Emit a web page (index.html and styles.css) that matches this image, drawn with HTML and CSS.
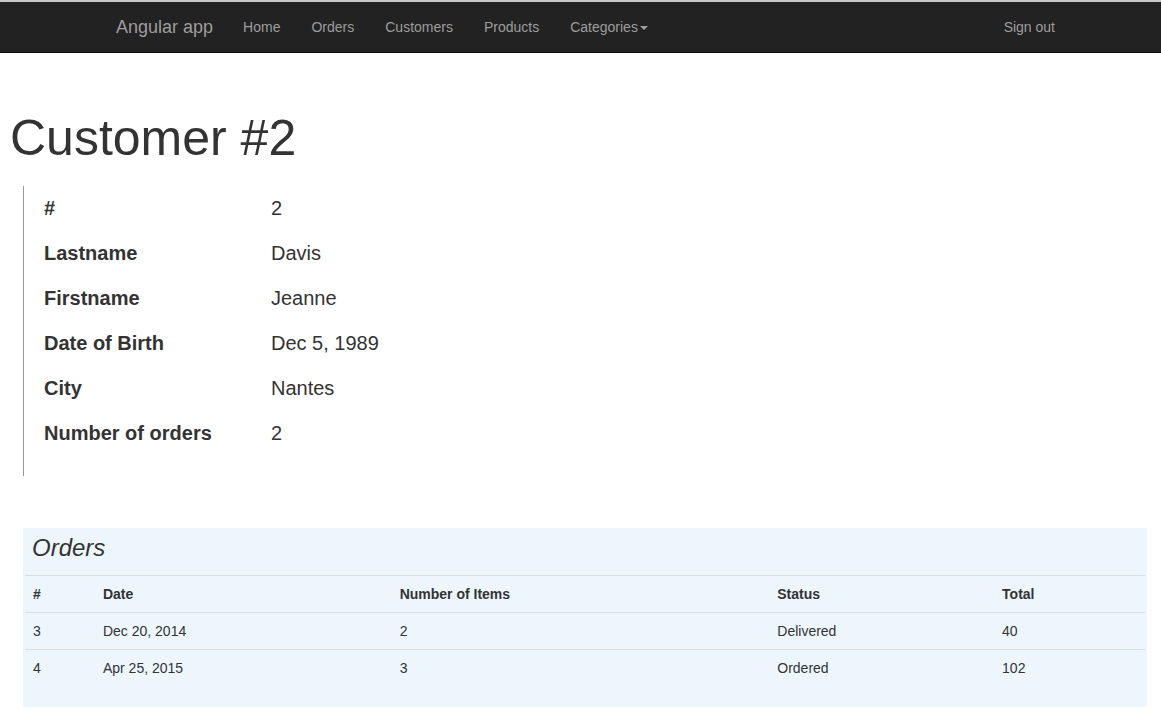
FILE: index.html
```html
<!DOCTYPE html>
<html lang="en">
<head>
<meta charset="utf-8">
<title>Angular app</title>
<link rel="stylesheet" href="styles.css">
</head>
<body>
<div class="topline"></div>
<nav class="navbar">
  <a class="brand" href="#">Angular app</a>
  <ul class="nav nav-left">
    <li><a href="#">Home</a></li>
    <li><a href="#">Orders</a></li>
    <li><a href="#">Customers</a></li>
    <li><a href="#">Products</a></li>
    <li><a href="#">Categories<span class="caret"></span></a></li>
  </ul>
  <ul class="nav nav-right">
    <li><a href="#">Sign out</a></li>
  </ul>
</nav>
<main class="page">
  <h1 class="title">Customer #2</h1>
  <dl class="details">
    <div class="row"><dt>#</dt><dd>2</dd></div>
    <div class="row"><dt>Lastname</dt><dd>Davis</dd></div>
    <div class="row"><dt>Firstname</dt><dd>Jeanne</dd></div>
    <div class="row"><dt>Date of Birth</dt><dd>Dec 5, 1989</dd></div>
    <div class="row"><dt>City</dt><dd>Nantes</dd></div>
    <div class="row"><dt>Number of orders</dt><dd>2</dd></div>
  </dl>
  <section class="orders">
    <h3 class="orders-title">Orders</h3>
    <table class="table">
      <colgroup>
        <col class="c-id"><col class="c-date"><col class="c-items"><col class="c-status"><col class="c-total">
      </colgroup>
      <thead>
        <tr><th>#</th><th>Date</th><th>Number of Items</th><th>Status</th><th>Total</th></tr>
      </thead>
      <tbody>
        <tr><td>3</td><td>Dec 20, 2014</td><td>2</td><td>Delivered</td><td>40</td></tr>
        <tr><td>4</td><td>Apr 25, 2015</td><td>3</td><td>Ordered</td><td>102</td></tr>
      </tbody>
    </table>
  </section>
</main>
</body>
</html>
```
FILE: styles.css
```css
* { box-sizing: border-box; }
html, body { margin: 0; padding: 0; }
body {
  font-family: "Liberation Sans", Arial, sans-serif;
  font-size: 14px;
  line-height: 20px;
  color: #333;
  background: #fff;
}
.topline { height: 2px; background: #c9c9c9; }
.navbar {
  display: flex;
  align-items: stretch;
  height: 51px;
  background: #222;
  border-bottom: 1px solid #080808;
  padding: 0 91px 0 101px;
}
.brand {
  display: block;
  padding: 15px;
  font-size: 18px;
  line-height: 20px;
  color: #9d9d9d;
  text-decoration: none;
}
.nav {
  list-style: none;
  margin: 0;
  padding: 0;
  display: flex;
}
.nav a {
  display: block;
  padding: 15px;
  line-height: 20px;
  color: #9d9d9d;
  text-decoration: none;
}
.nav-left a { padding-right: 16px; }
.nav-right { margin-left: auto; }
.caret {
  display: inline-block;
  width: 0;
  height: 0;
  margin-left: 2px;
  vertical-align: middle;
  border-top: 4px solid #9d9d9d;
  border-left: 4px solid transparent;
  border-right: 4px solid transparent;
}
.page { padding: 0 14px 0 8px; }
.title {
  margin: 58px 0 20px 2px;
  font-size: 50px;
  font-weight: 400;
  line-height: 55px;
}
.details {
  margin: 0 0 52px 15px;
  padding: 0 0 20px 20px;
  border-left: 1px solid #999;
  font-size: 20px;
}
.row {
  display: flex;
  line-height: 45px;
}
.row dt {
  width: 227px;
  font-weight: 700;
}
.row dd { margin: 0; }
.orders {
  margin-left: 15px;
  background: #eef6fd;
  padding: 6px 2px 21px;
}
.orders-title {
  margin: 0 0 14px;
  padding-left: 7px;
  font-size: 24px;
  font-style: italic;
  font-weight: 400;
  line-height: 27px;
}
.table {
  width: 100%;
  border-collapse: collapse;
  border-spacing: 0;
}
.c-id { width: 70px; }
.c-date { width: 297px; }
.c-items { width: 378px; }
.c-status { width: 225px; }
.c-total { width: 151px; }
.table th, .table td {
  padding: 8px;
  text-align: left;
  line-height: 20px;
  border-top: 1px solid #ddd;
}
.table th { font-weight: 700; }
```
